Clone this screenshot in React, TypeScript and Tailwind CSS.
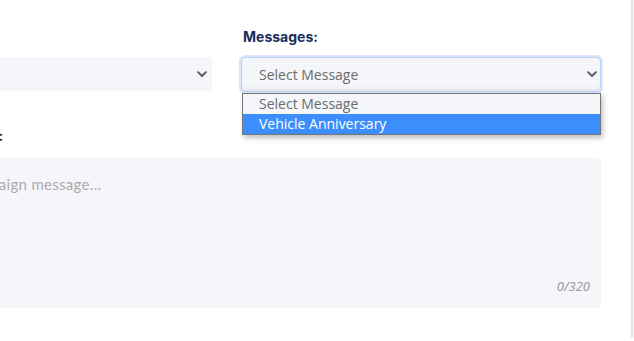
const Chevron = () => (
  <svg width="10" height="7" viewBox="0 0 10 7" fill="none" className="shrink-0">
    <path d="M1.2 1.3 L5 5 L8.8 1.3" stroke="#5f5f64" strokeWidth="2" strokeLinecap="round" strokeLinejoin="round" />
  </svg>
);

const labelFont = { fontFamily: "Inter, 'Noto Sans', sans-serif" };
const selectFont = { fontFamily: "'Open Sans', 'Noto Sans', sans-serif" };

const App: React.FC = () => {
  return (
    <div className="flex h-[341px] w-[634px] overflow-hidden bg-white">
      <div className="relative flex-1 overflow-hidden">
        <div className="-ml-[148px] w-[749px] pt-[27px]">
          <div className="grid grid-cols-[360px_360px] gap-x-[29px]">
            {/* labels */}
            <label className="w-fit text-[14px] font-bold leading-[20px] text-[#1a2b5c]" style={labelFont}>
              Campaign:
            </label>
            <label className="pl-[2px] text-[14px] font-bold leading-[20px] text-[#1a2b5c]" style={labelFont}>
              Messages:
            </label>

            {/* selects */}
            <div className="mt-[10px] flex h-[34px] items-center justify-end rounded-[4px] bg-[#f5f6fa] pr-[5px]">
              <Chevron />
            </div>
            <div className="relative mt-[10px]">
              <div
                className="flex h-[35px] items-center justify-between rounded-[4px] border border-[#bcd2f7] bg-[#f5f6fa] pl-[17px] pr-[3px] shadow-[0_0_0_2px_#dae6fc,inset_0_-4px_6px_-4px_rgba(0,0,0,0.12)]"
                style={selectFont}
              >
                <span className="text-[14px] text-[#6b6b6b]">Select Message</span>
                <Chevron />
              </div>
              {/* open list */}
              <div
                className="absolute left-[1px] right-0 top-[36px] z-10 border border-[#767676] bg-[#f5f6fa] shadow-[2px_3px_5px_rgba(0,0,0,0.25)]"
                style={selectFont}
              >
                <div className="h-[20px] pl-[16px] text-[14px] leading-[20px] text-[#6b6b6b]">Select Message</div>
                <div className="h-[20px] bg-[#3c8efc] pl-[16px] text-[14px] leading-[20px] text-white">
                  Vehicle Anniversary
                </div>
              </div>
            </div>

            {/* message textarea */}
            <label
              className="col-span-2 mt-[34px] w-fit pl-[11px] text-[14px] font-bold leading-[20px] text-[#1a2b5c]"
              style={labelFont}
            >
              Campaign Message:
            </label>
            <div className="relative col-span-2 mt-[12px] h-[150px] rounded-[4px] bg-[#f5f6fa]">
              <textarea
                className="h-full w-full resize-none bg-transparent pl-[35px] pr-[16px] pt-[15px] text-[15px] outline-none placeholder:text-[#ababaf]"
                style={{ fontFamily: "Lato, 'Noto Sans', sans-serif", letterSpacing: "0.3px" }}
                placeholder="Enter your campaign message..."
              />
              <span
                className="absolute bottom-[12px] right-[11px] text-[13px] italic text-[#9a9aa0]"
                style={{ fontFamily: "'Noto Sans', sans-serif" }}
              >
                0/320
              </span>
            </div>
          </div>
        </div>
      </div>
      <div className="h-[338px] w-[3px] border-l-2 border-[#e4e4ec] bg-[#f7f7f9]" />
    </div>
  );
};

export default App;
